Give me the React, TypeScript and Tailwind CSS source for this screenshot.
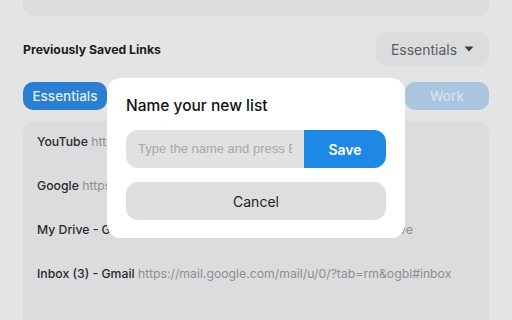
import { useState } from 'react';

const links = [
  { title: 'YouTube', url: 'https://www.youtube.com/' },
  { title: 'Google', url: 'https://www.google.com/' },
  { title: 'My Drive - Google Drive', url: 'https://drive.google.com/drive/my-drive' },
  { title: 'Inbox (3) - Gmail', url: 'https://mail.google.com/mail/u/0/?tab=rm&ogbl#inbox' },
];

const tabs = ['Essentials', 'Reading', 'Social', 'Tools', 'Work'];

export default function App() {
  const [name, setName] = useState('');

  return (
    <div className="relative h-[320px] w-[512px] overflow-hidden bg-[#e4e4e4] font-['Inter',sans-serif]">
      <div className="px-[23px]">
        <div className="-mt-[40px] flex h-[56px] items-start justify-center rounded-b-xl bg-[#dadcde] pt-[23px] text-[13px] leading-[14px] text-[#333]">
          <span className="pl-[40px]">Save your open tabs quickly</span>
        </div>

        <div className="mt-[16px] flex items-center justify-between">
          <p className="pt-[2px] text-[12.25px] font-bold text-[#1d1d1d]">Previously Saved Links</p>
          <button
            type="button"
            className="flex h-[34px] w-[113px] items-center justify-center gap-[7px] rounded-[10px] bg-[#dadcde] text-[14px] text-[#5a5c5e]"
          >
            Essentials
            <svg width="10" height="6" viewBox="0 0 10 6">
              <path d="M0.5 0.5h9L5 5.5z" fill="#3a3c3e" />
            </svg>
          </button>
        </div>

        <div className="mt-[16px] flex justify-between">
          {tabs.map((tab, i) => (
            <span
              key={tab}
              className={`flex h-[28px] w-[84px] items-center justify-center rounded-[10px] text-[13.5px] font-medium ${
                i === 0 ? 'bg-[#2a7fd2] text-[#e4ecf5]' : 'bg-[#a9c5e0] text-[#d6e3ef]'
              }`}
            >
              {tab}
            </span>
          ))}
        </div>

        <div className="mt-[11px] h-[220px] rounded-xl bg-[#dadcde] px-[14px] pt-[12px]">
          {links.map((link) => (
            <p key={link.title} className="h-[44px] truncate text-[12.25px] leading-[18px]">
              <span className="font-medium text-[#2a2a2a]">{link.title}</span>{' '}
              <span className="text-[#8d8f91]">{link.url}</span>
            </p>
          ))}
        </div>
      </div>

      <div className="absolute inset-0 flex items-center justify-center pb-[4px]">
        <div className="w-[298px] rounded-[14px] bg-white px-[19px] pb-[18px] pt-[18px]">
          <h2 className="text-[15.5px] font-medium leading-[20px] text-[#111]">Name your new list</h2>
          <div className="mt-[14px] flex h-[38px] overflow-hidden rounded-[12px]">
            <input
              autoFocus
              value={name}
              onChange={(e) => setName(e.target.value)}
              placeholder="Type the name and press Enter"
              className="min-w-0 flex-1 bg-[#e1e1e1] pl-[12px] pr-[12px] font-['Liberation_Sans',Arial,sans-serif] text-[13px] text-[#222] outline-none placeholder:text-[#a8a8a8]"
            />
            <button type="button" className="w-[82px] bg-[#1e88e5] text-[14px] font-semibold text-white">
              Save
            </button>
          </div>
          <button
            type="button"
            className="mt-[14px] h-[38px] w-full rounded-[12px] bg-[#dedede] text-[14px] text-[#222]"
          >
            Cancel
          </button>
        </div>
      </div>
    </div>
  );
}
